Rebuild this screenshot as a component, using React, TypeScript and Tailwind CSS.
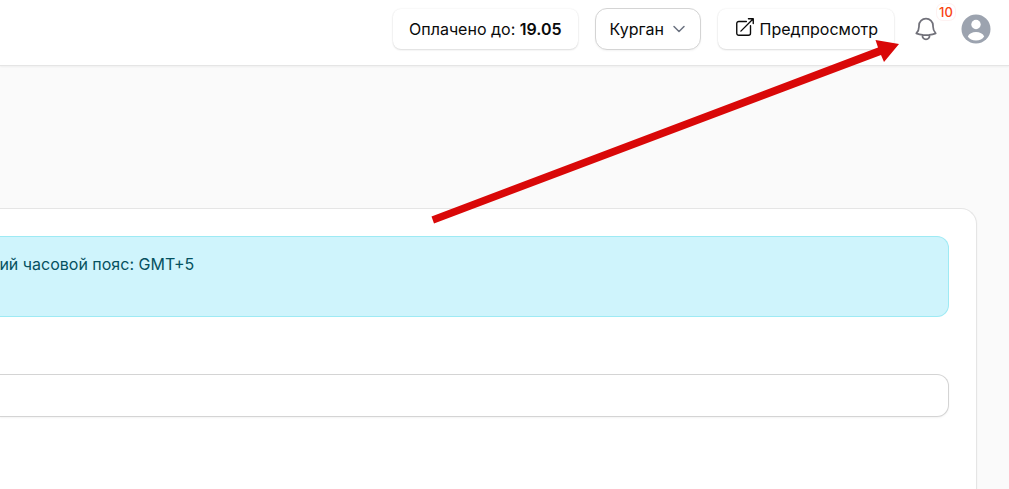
import type { ReactNode } from 'react';

export default function App() {
  return (
    <div className="relative flex min-h-screen flex-col overflow-hidden bg-[#fafafa] font-[Inter,sans-serif] text-base text-neutral-950">
      <header className="flex items-center justify-end border-b border-neutral-200 bg-white pt-2 pr-[18px] pb-[15px] shadow-xs">
        <div className="flex items-center gap-[17px]">
          <HeaderCard>
            <span>Оплачено до: <b className="font-semibold">19.05</b></span>
          </HeaderCard>
          <CitySelect />
          <button type="button" aria-label="Предпросмотр">
            <HeaderCard>
              <ExternalIcon />
              <span>Предпросмотр</span>
            </HeaderCard>
          </button>
        </div>
        <button type="button" aria-label="Уведомления" className="relative ml-[18px]">
          <BellIcon />
          <span className="absolute -top-[11px] left-[25px] rounded-md bg-white px-0.5 text-[13px] leading-4 font-medium text-[#f9430f] ring-1 ring-red-50">10</span>
        </button>
        <button type="button" aria-label="Профиль" className="ml-[21px]">
          <AvatarIcon />
        </button>
      </header>

      <main className="flex flex-1 flex-col pt-[142px] pr-8">
        <section className="flex-1 rounded-tr-2xl border-t border-r border-neutral-200 bg-white pt-[27px] pr-[27px] shadow-xs">
          <div className="flex h-[81px] rounded-r-xl border-y border-r border-[#9eeaf4] bg-[#cff4fc] pt-[15px] text-[#055160]">
            <p className="-ml-3.5 leading-6">щий часовой пояс: GMT+5</p>
          </div>
          <input
            type="text"
            aria-label="Значение"
            className="mt-[57px] block h-[43px] w-full rounded-r-xl border-y border-r border-neutral-300 bg-white px-4 shadow-xs outline-none"
          />
        </section>
      </main>

      <Arrow />
    </div>
  );
}

function HeaderCard({ children }: { children: ReactNode }) {
  return (
    <div className="flex h-10 items-center gap-1 rounded-lg bg-white px-4 shadow-[0_0_2px_rgba(0,0,0,0.08),0_1px_2px_rgba(0,0,0,0.12)]">
      {children}
    </div>
  );
}

function CitySelect() {
  return (
    <div className="relative">
      <select
        aria-label="Город"
        className="block h-[42px] w-[106px] appearance-none rounded-xl border border-neutral-300 bg-white pl-3.5 shadow-xs outline-none"
      >
        <option>Курган</option>
      </select>
      <svg className="pointer-events-none absolute top-[13px] right-[14px] size-4" viewBox="0 0 16 16" fill="none" stroke="#6b7280" strokeWidth="1.5">
        <path d="M3 5.5l5 5L13 5.5" strokeLinecap="round" strokeLinejoin="round" />
      </svg>
    </div>
  );
}

function ExternalIcon() {
  return (
    <svg className="-mt-1 size-[22px]" viewBox="0 0 24 24" fill="none" stroke="currentColor" strokeWidth="1.5" strokeLinecap="round" strokeLinejoin="round">
      <path d="M13.5 6H5.25A2.25 2.25 0 0 0 3 8.25v10.5A2.25 2.25 0 0 0 5.25 21h10.5A2.25 2.25 0 0 0 18 18.75V10.5m-10.5 6L21 3m0 0h-5.25M21 3v5.25" />
    </svg>
  );
}

function BellIcon() {
  return (
    <svg className="size-7" viewBox="0 0 24 24" fill="none" stroke="#71717a" strokeWidth="1.5" strokeLinecap="round" strokeLinejoin="round">
      <path d="M14.857 17.082a23.848 23.848 0 0 0 5.454-1.31A8.967 8.967 0 0 1 18 9.75V9A6 6 0 0 0 6 9v.75a8.967 8.967 0 0 1-2.312 6.022c1.733.64 3.56 1.085 5.455 1.31m5.714 0a24.255 24.255 0 0 1-5.714 0m5.714 0a3 3 0 1 1-5.714 0" />
    </svg>
  );
}

function AvatarIcon() {
  return (
    <svg className="size-[30px]" viewBox="0 0 30 30">
      <circle cx="15" cy="15" r="14.5" fill="#9ca3af" />
      <circle cx="15" cy="10.5" r="4.7" fill="white" />
      <path d="M6.8 22.5C8 19.5 11.3 18 15 18s7 1.500 8.200 4.500C21.500 25 18.800 26.500 15 26.500S8.500 25 6.800 22.500z" fill="white" />
    </svg>
  );
}

function Arrow() {
  return (
    <svg className="pointer-events-none absolute top-[38px] left-[430px]" width="472" height="188" viewBox="430 38 472 188">
      <path d="M431.5 216.5L878 47.5L875.5 40L899 44L884 62L881 55L434 223.5z" fill="#d90808" />
    </svg>
  );
}
